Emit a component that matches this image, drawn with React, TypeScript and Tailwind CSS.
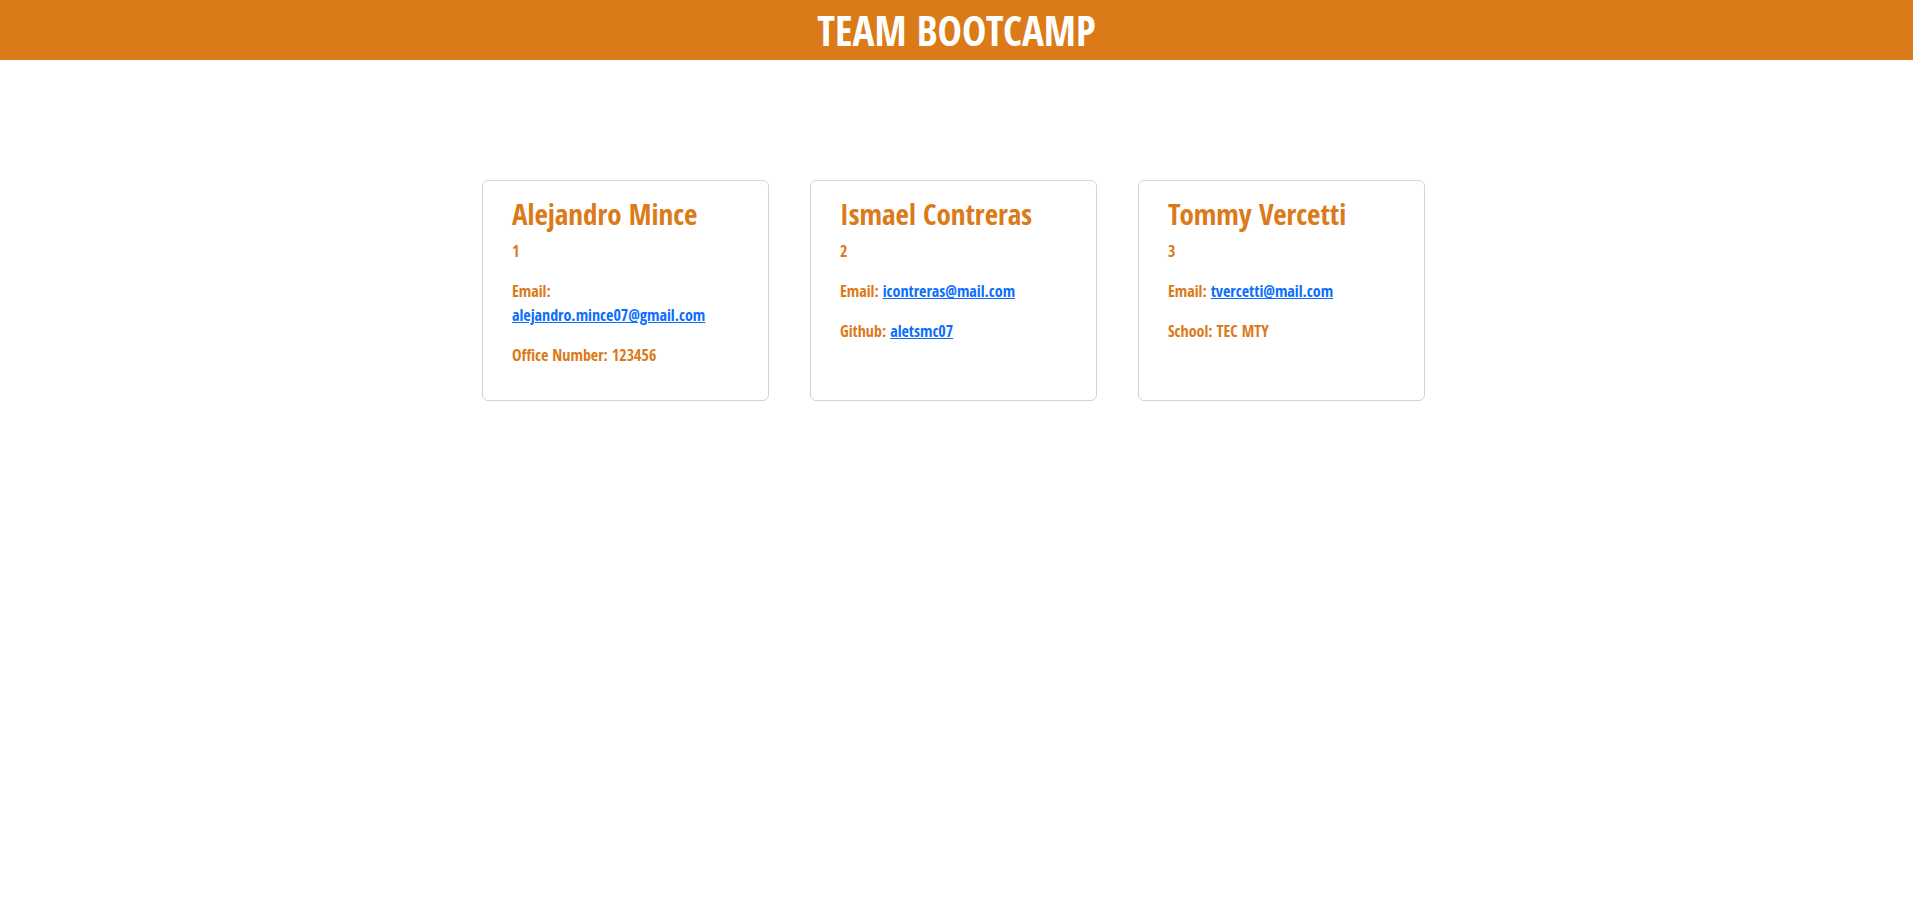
import React from "react";

type P = { label: string; value: string; link?: boolean };

function Card({ name, id, rows }: { name: string; id: string; rows: P[] }) {
  return (
    <div className="w-[287px] rounded-[6px] border border-[#d3d3d3] bg-white px-[29px] pt-[16px] pb-[17px]">
      <h3 className="text-[29px] leading-[34px] font-bold text-[#db7a18] mb-[8px]">{name}</h3>
      <p className="text-[16px] leading-[24px] font-bold text-[#db7a18] mb-[16px]">{id}</p>
      {rows.map((r) => (
        <p key={r.label} className="text-[16px] leading-[24px] font-bold text-[#db7a18] mb-[16px]">
          {r.label}:{" "}
          {r.link ? (
            <a href="#" className="text-[#0d6efd] underline">
              {r.value}
            </a>
          ) : (
            r.value
          )}
        </p>
      ))}
    </div>
  );
}

export default function App() {
  return (
    <div className="min-h-[916px] bg-white font-['Open_Sans_Condensed','Roboto_Condensed',sans-serif]">
      <header className="h-[60px] bg-[#db7a18] flex items-center justify-center">
        <h1 className="text-[41px] leading-[60px] font-bold text-white">TEAM BOOTCAMP</h1>
      </header>
      <main className="mt-[120px] flex justify-center items-stretch gap-[41px] pr-[6px]">
        <Card
          name="Alejandro Mince"
          id="1"
          rows={[
            { label: "Email", value: "alejandro.mince07@gmail.com", link: true },
            { label: "Office Number", value: "123456" },
          ]}
        />
        <Card
          name="Ismael Contreras"
          id="2"
          rows={[
            { label: "Email", value: "icontreras@mail.com", link: true },
            { label: "Github", value: "aletsmc07", link: true },
          ]}
        />
        <Card
          name="Tommy Vercetti"
          id="3"
          rows={[
            { label: "Email", value: "tvercetti@mail.com", link: true },
            { label: "School", value: "TEC MTY" },
          ]}
        />
      </main>
    </div>
  );
}
